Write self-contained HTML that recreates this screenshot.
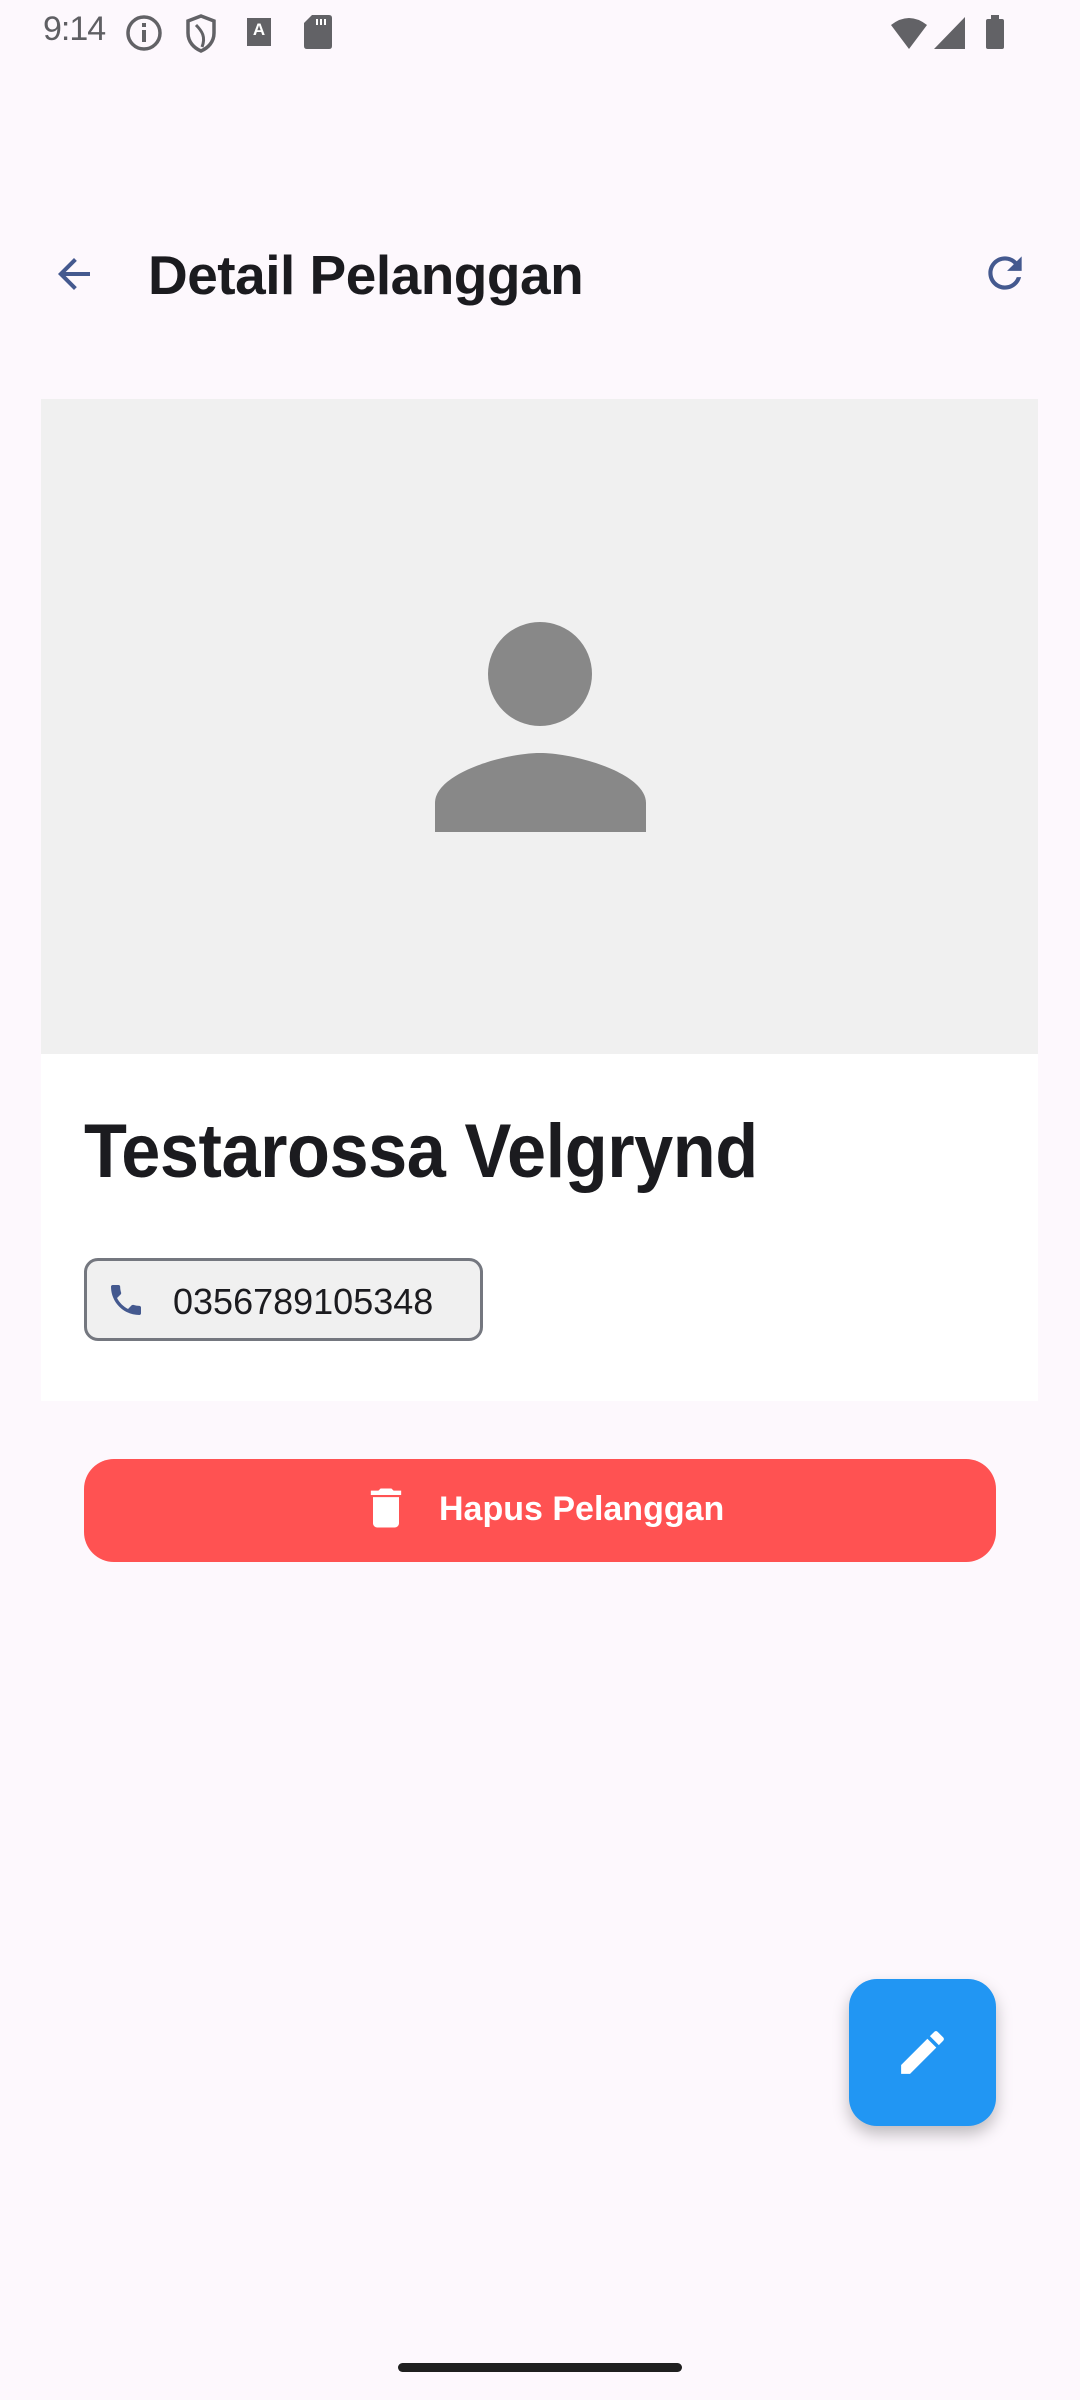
<!DOCTYPE html>
<html><head><meta charset="utf-8">
<style>
*{margin:0;padding:0;box-sizing:border-box}
html,body{width:1080px;height:2400px;overflow:hidden;background:#fdf8fd;font-family:"Liberation Sans",sans-serif;position:relative}
.abs{position:absolute}
</style></head><body>
<!-- status bar -->
<div class="abs" style="left:43px;top:10px;font-size:34px;color:#5f5f63;letter-spacing:-1px">9:14</div>
<svg class="abs" style="left:124px;top:13px" width="40" height="40" viewBox="0 0 40 40"><circle cx="20" cy="20" r="16" fill="none" stroke="#626266" stroke-width="3.5"/><rect x="18" y="17" width="4" height="12" fill="#626266"/><rect x="18" y="10" width="4" height="4" fill="#626266"/></svg>
<svg class="abs" style="left:184px;top:13px" width="34" height="40" viewBox="0 0 34 40"><path d="M17 3 L30 8 V20 C30 29 24 35 17 38 C10 35 4 29 4 20 V8 Z" fill="none" stroke="#626266" stroke-width="3.5"/><path d="M12 12 C18 18 22 24 18 34" fill="none" stroke="#626266" stroke-width="3"/></svg>
<div class="abs" style="left:247px;top:18px;width:24px;height:28px;background:#626266;color:#fff;font-size:17px;font-weight:bold;text-align:center;line-height:24px">A</div>
<svg class="abs" style="left:304px;top:15px" width="28" height="34" viewBox="0 0 28 34"><path d="M8 0 H25 Q28 0 28 3 V31 Q28 34 25 34 H3 Q0 34 0 31 V8 Z" fill="#626266"/><rect x="12" y="4" width="2" height="6" fill="#fff"/><rect x="16" y="4" width="2" height="6" fill="#fff"/><rect x="20" y="4" width="2" height="6" fill="#fff"/></svg>
<svg class="abs" style="left:890px;top:15px" width="120" height="36" viewBox="0 0 120 36"><path d="M1 10 Q19 -4 37 10 L19 34 Z" fill="#626266"/><path d="M44 34 L75 2 V34 Z" fill="#626266"/><rect x="96" y="4" width="18" height="30" rx="2" fill="#626266"/><rect x="101" y="0" width="8" height="5" fill="#626266"/></svg>

<!-- app bar -->
<svg class="abs" style="left:50px;top:250px" width="48" height="48" viewBox="0 0 24 24"><path d="M20 11H7.83l5.59-5.59L12 4l-8 8 8 8 1.41-1.41L7.83 13H20v-2z" fill="#44598f"/></svg>
<div class="abs" style="left:148px;top:243px;font-size:55px;font-weight:bold;color:#1b1b1f;letter-spacing:-0.5px">Detail Pelanggan</div>
<svg class="abs" style="left:980px;top:248px" width="50" height="50" viewBox="0 0 24 24"><path d="M17.65 6.35C16.2 4.9 14.210 4 12 4c-4.42 0-7.99 3.58-7.99 8s3.57 8 7.99 8c3.730 0 6.840-2.55 7.730-6h-2.08c-.82 2.33-3.04 4-5.65 4-3.31 0-6-2.69-6-6s2.690-6 6-6c1.66 0 3.140.69 4.220 1.78L13 11h7V4l-2.35 2.350z" fill="#44598f"/></svg>

<!-- image area -->
<div class="abs" style="left:41px;top:399px;width:997px;height:655px;background:#f0f0f0"></div>
<div class="abs" style="left:488px;top:622px;width:104px;height:104px;border-radius:50%;background:#888"></div>
<svg class="abs" style="left:435px;top:753px" width="211" height="79" viewBox="0 0 211 79"><path d="M0 79 V50 C0 20 70 0 105 0 C140 0 211 20 211 50 V79 Z" fill="#888"/></svg>

<!-- card -->
<div class="abs" style="left:41px;top:1054px;width:997px;height:347px;background:#fff"></div>
<div class="abs" style="left:84px;top:1108px;font-size:76px;font-weight:bold;color:#1b1b1f;letter-spacing:-0.5px;transform:scaleX(0.925);transform-origin:0 0;white-space:nowrap">Testarossa Velgrynd</div>
<div class="abs" style="left:84px;top:1258px;width:399px;height:83px;border:3px solid #74777f;border-radius:14px;background:#f0f0f0"></div>
<svg class="abs" style="left:106px;top:1280px" width="40" height="40" viewBox="0 0 24 24"><path d="M6.62 10.79c1.44 2.83 3.76 5.14 6.59 6.59l2.2-2.2c.27-.27.67-.36 1.02-.24 1.12.37 2.33.57 3.57.57.55 0 1 .45 1 1V20c0 .55-.45 1-1 1-9.39 0-17-7.61-17-17 0-.55.45-1 1-1h3.5c.55 0 1 .45 1 1 0 1.25.2 2.45.57 3.57.11.35.03.74-.25 1.02l-2.2 2.2z" fill="#44598f"/></svg>
<div class="abs" style="left:173px;top:1281px;font-size:36px;color:#1b1b1f">0356789105348</div>

<!-- delete button -->
<div class="abs" style="left:84px;top:1459px;width:912px;height:103px;border-radius:30px;background:#ff5252"></div>
<svg class="abs" style="left:360px;top:1482px" width="52" height="52" viewBox="0 0 24 24"><path d="M6 19c0 1.1.9 2 2 2h8c1.1 0 2-.9 2-2V7H6v12zM19 4h-3.5l-1-1h-5l-1 1H5v2h14V4z" fill="#fff"/></svg>
<div class="abs" style="left:439px;top:1490px;font-size:34px;font-weight:bold;color:#fff">Hapus Pelanggan</div>

<!-- FAB -->
<div class="abs" style="left:849px;top:1979px;width:147px;height:147px;border-radius:28px;background:#2196f3;box-shadow:0 8px 16px rgba(0,0,0,0.25)"></div>
<svg class="abs" style="left:894px;top:2024px" width="57" height="57" viewBox="0 0 24 24"><path d="M3 17.25V21h3.75L17.81 9.94l-3.75-3.75L3 17.25zM20.71 7.04c.39-.39.39-1.02 0-1.41l-2.34-2.34c-.39-.39-1.02-.39-1.41 0l-1.83 1.83 3.75 3.75 1.83-1.83z" fill="#fff"/></svg>

<!-- home indicator -->
<div class="abs" style="left:398px;top:2363px;width:284px;height:9px;border-radius:5px;background:#1f1f1f"></div>
</body></html>
